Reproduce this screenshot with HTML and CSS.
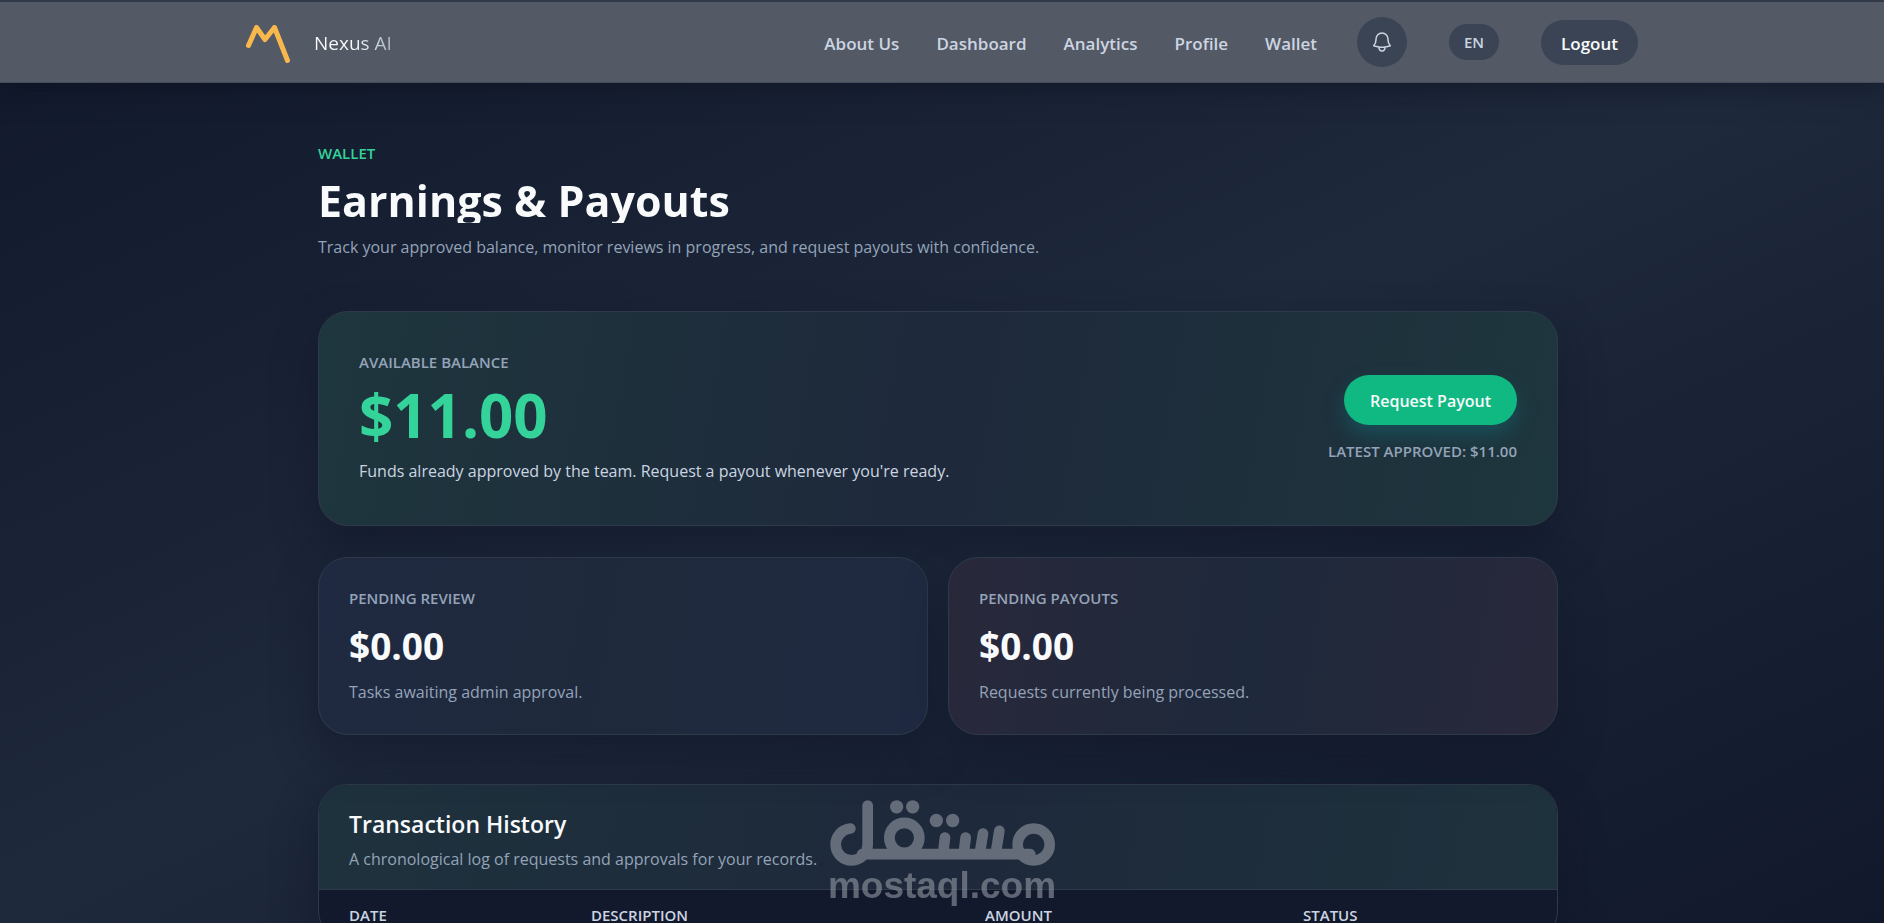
FILE: index.html
```html
<!DOCTYPE html>
<html lang="en">
<head>
<meta charset="utf-8">
<meta name="viewport" content="width=device-width, initial-scale=1">
<title>Nexus AI – Wallet</title>
<link rel="stylesheet" href="styles.css">
</head>
<body>
<div class="page">
  <header class="topbar">
    <div class="topbar-inner">
      <a class="brand" href="#">
        <svg class="brand-mark" viewBox="0 0 44 38" aria-hidden="true"><path d="M2.500 20.500 10.500 2.500 19 14.500 28.500 2.500 41.500 35.500"/></svg>
        <span class="brand-name">Nexus AI</span>
      </a>
      <nav class="nav">
        <a href="#">About Us</a>
        <a href="#">Dashboard</a>
        <a href="#">Analytics</a>
        <a href="#">Profile</a>
        <a href="#">Wallet</a>
      </nav>
      <div class="actions">
        <button class="pill bell" type="button" aria-label="Notifications">
          <svg viewBox="0 0 24 24" aria-hidden="true"><path d="M14.857 17.082a23.848 23.848 0 0 0 5.454-1.310A8.967 8.967 0 0 1 18 9.750V9A6 6 0 0 0 6 9v.75a8.967 8.967 0 0 1-2.312 6.022c1.733.64 3.560 1.085 5.455 1.310m5.714 0a24.255 24.255 0 0 1-5.714 0m5.714 0a3 3 0 1 1-5.714 0"/></svg>
        </button>
        <button class="pill lang" type="button">EN</button>
        <button class="pill logout" type="button">Logout</button>
      </div>
    </div>
  </header>

  <main class="main">
    <div class="content">
      <section class="intro">
        <p class="eyebrow">WALLET</p>
        <h1>Earnings &amp; Payouts</h1>
        <p class="muted">Track your approved balance, monitor reviews in progress, and request payouts with confidence.</p>
      </section>

      <section class="card balance">
        <div class="balance-info">
          <h2 class="label">AVAILABLE BALANCE</h2>
          <p class="balance-amount">$11.00</p>
          <p class="balance-note">Funds already approved by the team. Request a payout whenever you're ready.</p>
        </div>
        <div class="balance-side">
          <button class="payout" type="button">Request Payout</button>
          <p class="label">LATEST APPROVED: $11.00</p>
        </div>
      </section>

      <div class="stats">
        <section class="card stat review">
          <h2 class="label">PENDING REVIEW</h2>
          <p class="stat-amount">$0.00</p>
          <p class="muted">Tasks awaiting admin approval.</p>
        </section>
        <section class="card stat payouts">
          <h2 class="label">PENDING PAYOUTS</h2>
          <p class="stat-amount">$0.00</p>
          <p class="muted">Requests currently being processed.</p>
        </section>
      </div>

      <section class="card history">
        <div class="history-head">
          <h2>Transaction History</h2>
          <p class="muted">A chronological log of requests and approvals for your records.</p>
        </div>
        <table>
          <thead>
            <tr>
              <th class="col-date" scope="col">DATE</th>
              <th class="col-desc" scope="col">DESCRIPTION</th>
              <th class="col-amount" scope="col">AMOUNT</th>
              <th scope="col">STATUS</th>
            </tr>
          </thead>
        </table>
      </section>
    </div>
  </main>

  <div class="watermark">
    <svg viewBox="80 85 690 215" role="img" aria-label="مستقل">
      <g class="mark-lines">
        <circle cx="700" cy="227" r="48"/>
        <circle cx="312" cy="207" r="45"/>
        <path d="M150 179A48 48 0 1 0 202 228V110M185 256H690M434 206 428 256M496 206 490 256M548 194 538 256M597 186 586 256"/>
      </g>
      <g class="mark-dots">
        <circle cx="289" cy="114" r="20"/><circle cx="337" cy="114" r="20"/>
        <circle cx="408" cy="155" r="20"/><circle cx="457" cy="155" r="20"/>
      </g>
    </svg>
    <span>mostaql.com</span>
  </div>
</div>
</body>
</html>
```
FILE: styles.css
```css
*, *::before, *::after { box-sizing: border-box; }

body {
  margin: 0;
  font-family: "Open Sans", "Noto Sans", sans-serif;
  font-size: 16px;
  line-height: 24px;
  color: #f8fafc;
}

h1, h2, p { margin: 0; }
button { font: inherit; color: inherit; border: 0; padding: 0; cursor: pointer; }

.page {
  position: relative;
  height: 100vh;
  overflow: hidden;
  background: linear-gradient(155deg, #11182b 0%, #1e293b 50%, #11182b 100%);
}

.topbar {
  border-top: 2px solid #303a48;
  border-bottom: 1px solid #454b59;
  background: #545966;
  box-shadow: 0 4px 24px rgba(10, 14, 30, 0.5);
}

.topbar-inner {
  display: flex;
  align-items: center;
  max-width: 1392px;
  height: 80px;
  margin: 0 auto;
}

.brand {
  display: flex;
  align-items: center;
  gap: 24px;
  margin-right: auto;
  padding-top: 4px;
  text-decoration: none;
}

.brand-mark {
  width: 44px;
  height: 38px;
  fill: none;
  stroke: #f9b84b;
  stroke-width: 5;
  stroke-linecap: round;
  stroke-linejoin: round;
}

.brand-name {
  padding-bottom: 3px;
  font-size: 19px;
  font-weight: 500;
  background: linear-gradient(90deg, #f8fafc 50%, #a9b8c9);
  background-clip: text;
  color: transparent;
}

.nav { display: flex; gap: 37px; margin-right: 40px; padding-top: 3px; }

.nav a {
  color: #cbd5e1;
  font-size: 17px;
  font-weight: 600;
  text-decoration: none;
}

.actions { display: flex; align-items: center; gap: 42px; }

.pill { background: #3b4454; border-radius: 25px; }

.bell { display: grid; place-items: center; width: 50px; height: 50px; }

.bell svg {
  width: 24px;
  height: 24px;
  fill: none;
  stroke: #cbd5e1;
  stroke-width: 1.5;
  stroke-linecap: round;
  stroke-linejoin: round;
}

.lang {
  width: 50px;
  height: 36px;
  color: #cbd5e1;
  font-size: 15px;
  font-weight: 600;
}

.logout { width: 97px; height: 45px; padding-top: 3px; font-size: 17px; font-weight: 600; }

.main { padding: 58px 8px 0 0; }

.content { max-width: 1240px; margin: 0 auto; }

.intro { margin-bottom: 52px; }

.eyebrow {
  color: #34d399;
  font-size: 15px;
  font-weight: 600;
}

h1 {
  margin: 13px 0 12px;
  font-size: 43px;
  font-weight: 700;
  line-height: 45px;
  background: #f8fafc;
  background-clip: text;
  color: transparent;
}

.muted { color: #94a3b8; }

.card {
  border: 1px solid #2e3a49;
  border-radius: 30px;
  box-shadow: 0 20px 40px rgba(15, 20, 40, 0.5);
}

.balance {
  display: flex;
  align-items: center;
  justify-content: space-between;
  padding: 40px 40px 42px;
  margin-bottom: 31px;
  background: linear-gradient(100deg, #1e363d 0%, #1e293b 50%, #1e363d 100%);
}

.label {
  color: #94a3b8;
  font-size: 15px;
  font-weight: 600;
  line-height: 20px;
}

.balance-amount {
  margin: 11px 0 12px;
  color: #34d399;
  font-size: 60px;
  font-weight: 700;
  line-height: 64px;
}

.balance-note { color: #cbd5e1; }

.balance-side { text-align: right; }

.payout {
  width: 173px;
  height: 50px;
  margin-bottom: 16px;
  padding-top: 2px;
  border-radius: 25px;
  background: #10b981;
  box-shadow: 0 10px 20px rgba(16, 120, 129, 0.4);
  font-weight: 600;
}

.stats {
  display: grid;
  grid-template-columns: 1fr 1fr;
  gap: 20px;
  margin-bottom: 49px;
}

.stat { padding: 30px; }
.review { background: linear-gradient(100deg, #1f2a42 0%, #1e293b 45%, #1f2a42 100%); }
.payouts { background: linear-gradient(100deg, #29283b 0%, #1e293b 50%, #29283b 100%); }

.stat-amount {
  margin: 14px 0 10px;
  font-size: 37px;
  font-weight: 700;
  line-height: 48px;
}

.history { overflow: hidden; background: #12192c; }

.history-head {
  padding: 23px 30px 18px;
  border-bottom: 1px solid #2e3a49;
  background: linear-gradient(100deg, #1e323d 0%, #1e293b 50%, #1e323d 100%);
}

.history-head h2 {
  margin-bottom: 7px;
  font-size: 23px;
  font-weight: 600;
  line-height: 32px;
}

table { width: 100%; table-layout: fixed; border-collapse: collapse; }

th {
  padding: 16px 0 16px 30px;
  color: #cbd5e1;
  font-size: 15px;
  font-weight: 600;
  line-height: 18px;
  text-align: left;
}

.col-date { width: 242px; }
.col-desc { width: 394px; }
.col-amount { width: 318px; }

.watermark {
  position: absolute;
  left: 50%;
  bottom: 20px;
  transform: translateX(-50%);
  display: flex;
  flex-direction: column;
  align-items: center;
  opacity: 0.55;
  color: #a0a3ad;
  pointer-events: none;
}

.watermark svg { width: 230px; height: 72px; }
.mark-lines { fill: none; stroke: currentColor; stroke-width: 32; stroke-linecap: round; }
.mark-dots { fill: currentColor; }

.watermark span {
  font-family: "Liberation Sans", Arial, sans-serif;
  font-size: 37px;
  font-weight: 700;
  line-height: 34px;
}
```
